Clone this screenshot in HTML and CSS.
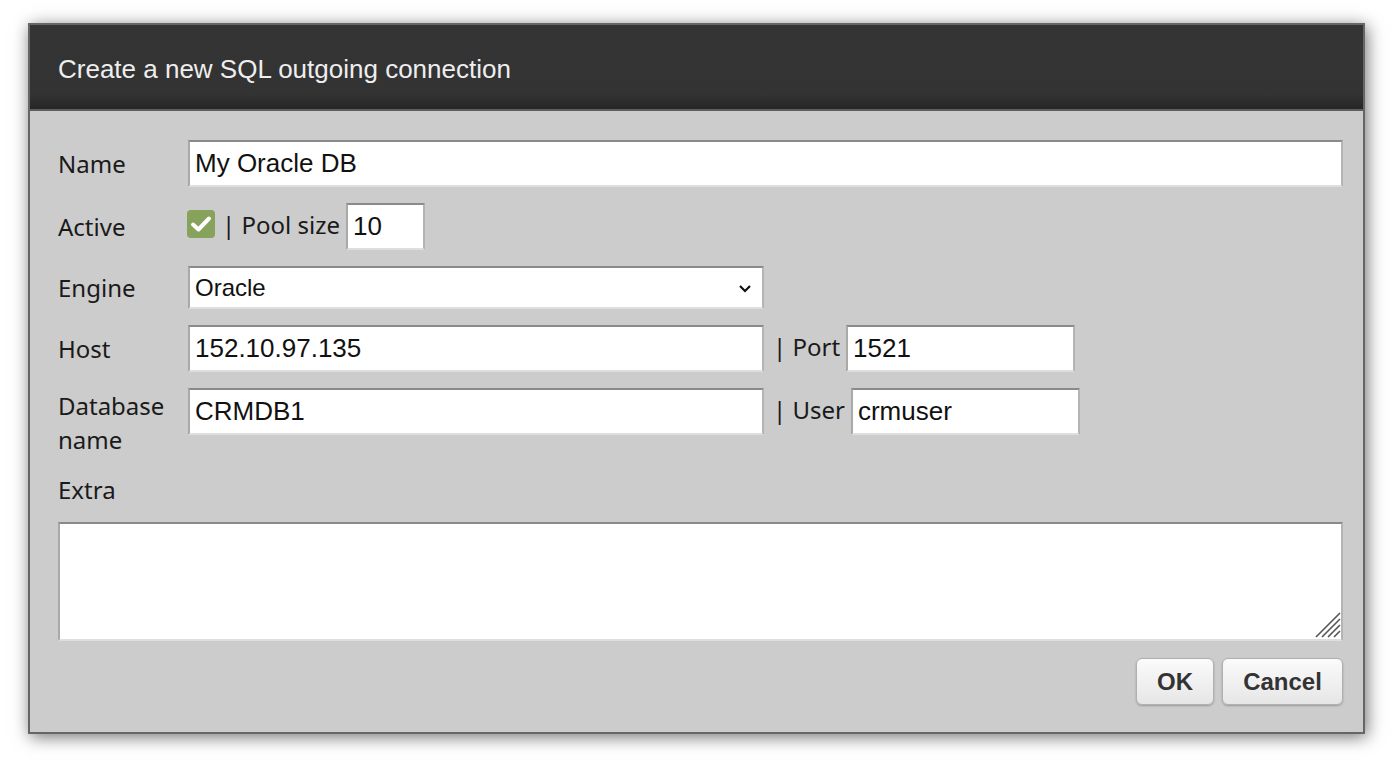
FILE: index.html
```html
<!DOCTYPE html>
<html>
<head>
<meta charset="utf-8">
<link rel="stylesheet" href="styles.css">
</head>
<body>
<div class="dialog">
  <div class="dialog-header">Create a new SQL outgoing connection</div>
  <div class="dialog-body">
    <div class="form-grid">
      <label class="lbl">Name</label>
      <input class="field field-full" type="text" value="My Oracle DB">

      <label class="lbl">Active</label>
      <div class="inline">
        <span class="check">
          <svg width="22" height="18" viewBox="0 0 22 18"><path d="M3 9.5 L8.5 14.5 L19 3.5" fill="none" stroke="#fff" stroke-width="4" stroke-linecap="round" stroke-linejoin="round"/></svg>
        </span>
        <span class="sep sep-pool">| Pool size</span>
        <input class="field field-pool" type="text" value="10">
      </div>

      <label class="lbl">Engine</label>
      <div class="inline">
        <div class="select">
          <span class="select-text">Oracle</span>
          <svg class="chev" width="14" height="9" viewBox="0 0 14 9"><path d="M2 2 L7 7 L12 2" fill="none" stroke="#111" stroke-width="2.2"/></svg>
        </div>
      </div>

      <label class="lbl">Host</label>
      <div class="inline">
        <input class="field field-main" type="text" value="152.10.97.135">
        <span class="sep">| Port</span>
        <input class="field field-side" type="text" value="1521">
      </div>

      <label class="lbl lbl-top">Database name</label>
      <div class="inline inline-top">
        <input class="field field-main" type="text" value="CRMDB1">
        <span class="sep">| User</span>
        <input class="field field-side" type="text" value="crmuser">
      </div>
    </div>

    <div class="lbl extra-lbl">Extra</div>
    <div class="extra-wrap">
      <textarea class="extra"></textarea>
      <svg class="grip" width="26" height="26" viewBox="0 0 26 26">
        <path d="M1 25 L25 1 M7 25 L25 7 M13 25 L25 13 M19 25 L25 19" stroke="#555" stroke-width="1.6" fill="none"/>
      </svg>
    </div>

    <div class="actions">
      <button class="btn btn-ok">OK</button>
      <button class="btn btn-cancel">Cancel</button>
    </div>
  </div>
</div>
</body>
</html>
```

FILE: styles.css
```css
html, body {
  margin: 0;
  padding: 0;
  background: #ffffff;
}

body {
  padding: 23px 0 37px 28px;
  min-height: 771px;
  box-sizing: border-box;
}

.dialog {
  width: 1333px;
  border: 2px solid #666;
  box-shadow: 2px 3px 16px rgba(0, 0, 0, 0.55);
  background: #cccccc;
}

.dialog-header {
  height: 80px;
  line-height: 80px;
  padding-top: 4px;
  padding-left: 28px;
  background: linear-gradient(#343434 0%, #333 82%, #262626 100%);
  border-bottom: 2px solid #5e5e5e;
  color: #eeeeee;
  font-family: "Liberation Sans", Arial, sans-serif;
  font-size: 26px;
}

.dialog-body {
  padding: 29px 20px 27px 28px;
  font-family: "Noto Sans", sans-serif;
  font-size: 24px;
  color: #1a1a1a;
}

.form-grid {
  display: grid;
  grid-template-columns: 130px 1fr;
  row-gap: 16px;
  align-items: center;
}

.lbl {
  line-height: 34px;
  color: #1a1a1a;
}

.lbl-top {
  align-self: start;
  margin-top: 1px;
}

.inline {
  display: flex;
  align-items: center;
}

.inline-top {
  align-self: start;
}

.field {
  box-sizing: border-box;
  flex-shrink: 0;
  height: 47px;
  border-style: solid;
  border-width: 2px;
  border-color: #8a8a8a #b4b4b4 #dedede #a9a9a9;
  background: #fff;
  padding: 0 5px;
  font-family: "Liberation Sans", Arial, sans-serif;
  font-size: 26px;
  color: #111;
  outline: none;
  margin: 0;
}

.field-full {
  width: 100%;
}

.field-pool {
  width: 79px;
}

.field-main {
  width: 576px;
}

.field-side {
  width: 229px;
}

.check {
  flex-shrink: 0;
  width: 28px;
  height: 28px;
  border-radius: 4px;
  background: #87a25a;
  display: flex;
  align-items: center;
  justify-content: center;
  margin-left: -1px;
  margin-top: -6px;
}

.sep {
  flex-shrink: 0;
  margin: 0 6px 0 9px;
  line-height: 34px;
  position: relative;
  top: -2px;
}

.sep-pool {
  margin-left: 7px;
  margin-right: 6px;
}

.select {
  box-sizing: border-box;
  width: 576px;
  height: 43px;
  border-style: solid;
  border-width: 2px;
  border-color: #8a8a8a #b4b4b4 #dedede #a9a9a9;
  background: #fff;
  display: flex;
  align-items: center;
  justify-content: space-between;
  padding: 0 10px 0 5px;
}

.select-text {
  font-family: "Liberation Sans", Arial, sans-serif;
  font-size: 24px;
  color: #111;
}

.chev {
  display: block;
  margin-top: 2px;
}

.extra-lbl {
  margin-top: 16px;
}

.extra-wrap {
  position: relative;
  margin-top: 15px;
}

.extra {
  display: block;
  box-sizing: border-box;
  width: 100%;
  height: 119px;
  margin: 0;
  resize: none;
  border-style: solid;
  border-width: 2px;
  border-color: #8a8a8a #b4b4b4 #dedede #a9a9a9;
  background: #fff;
  outline: none;
  font-family: "Liberation Sans", Arial, sans-serif;
  font-size: 24px;
}

.grip {
  position: absolute;
  right: 2px;
  bottom: 3px;
}

.actions {
  display: flex;
  justify-content: flex-end;
  gap: 8px;
  margin-top: 17px;
}

.btn {
  height: 47px;
  padding: 0 20px;
  border: 1px solid #b0b0b0;
  border-radius: 6px;
  background: linear-gradient(#fbfbfb, #e6e6e6);
  box-shadow: 0 1px 2px rgba(0, 0, 0, 0.25);
  font-family: "Liberation Sans", Arial, sans-serif;
  font-weight: bold;
  font-size: 24px;
  color: #333;
  cursor: pointer;
}

.btn-ok {
  width: 78px;
}

.btn-cancel {
  width: 121px;
}
```
